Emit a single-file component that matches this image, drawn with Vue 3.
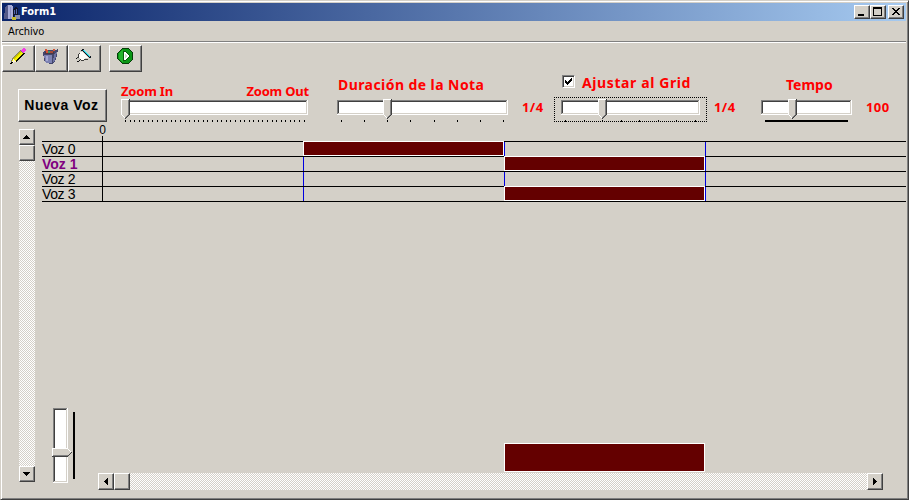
<script setup>
const range = (n, start, step) => Array.from({ length: n }, (_, i) => Math.round(start + i * step))

// Horizontal trackbars: coordinates are relative to the left edge of each bar
const bars = {
  zoom: { width: 187, track: [1, 186], thumb: 0, ticks: range(40, 4, 4.58) },
  duration: { width: 172, track: [0, 171], thumb: 46, ticks: [4, 27, 50, 73, 97, 120, 143, 166] },
  grid: { width: 140, track: [0, 139], thumb: 37, ticks: [4, 23, 41, 60, 78, 97, 115, 134] },
  tempo: { width: 91, track: [0, 91], thumb: 27, ticks: [], line: [4, 83] },
}

const voices = [
  { name: 'Voz 0', cells: [0, 1, 0, 0] },
  { name: 'Voz 1', cells: [0, 0, 1, 0], active: true },
  { name: 'Voz 2', cells: [0, 0, 0, 0] },
  { name: 'Voz 3', cells: [0, 0, 1, 0] },
]

const controls = [
  { id: 'zoom' },
  { id: 'duration', title: 'Duración de la Nota', value: '1/4' },
  { id: 'grid', title: 'Ajustar al Grid', value: '1/4', check: true },
  { id: 'tempo', title: 'Tempo', value: '100' },
]
</script>

<template>
  <div class="window">
    <header class="titlebar">
      <svg class="app-icon" width="16" height="16" viewBox="0 0 16 16" shape-rendering="crispEdges">
        <path d="M1 3 4 1V15H0Z" fill="#555a88" />
        <path d="M4 1H7L9 3V15H4Z" fill="#a8acd8" />
        <path d="M6 3H7V15H6Z" fill="#8b90c2" />
        <path d="M9 5 12 3 14 5V11H10V15H9Z" fill="#10152c" />
        <path d="M10 6H11V10H10ZM12 5H13V10H12Z" fill="#5264ac" />
        <path d="M11 11H16V15H11Z" fill="#858cac" />
        <path d="M8 13H12V16H8Z" fill="#c4b82f" />
      </svg>
      <h1>Form1</h1>
      <div class="window-buttons">
        <button class="raised">
          <svg width="12" height="10" shape-rendering="crispEdges"><path d="M2 7h6v2H2z" /></svg>
        </button>
        <button class="raised">
          <svg width="12" height="10" shape-rendering="crispEdges"><path fill-rule="evenodd" d="M1 0h9v9H1zM2 2v6h7V2z" /></svg>
        </button>
        <button class="raised close">
          <svg width="12" height="10" shape-rendering="crispEdges">
            <path d="M2 1h2v1h1v1h2V2h1V1h2v1H9v1H8v1H7v1h1v1h1v1h1v1H8V7H7V6H5v1H4v1H2V7h1V6h1V5h1V4H4V3H3V2H2z" />
          </svg>
        </button>
      </div>
    </header>

    <nav class="menu"><span>Archivo</span></nav>

    <div class="toolbar">
      <button class="raised tool">
        <svg width="16" height="17" shape-rendering="crispEdges">
          <path d="M1 15 3 10 11 2 14 5 6 13Z" fill="#f4f000" />
          <path d="M3.5 11 11 3.5" stroke="#c8c200" />
          <path d="M1 15.5 2.5 10.5 11 2" stroke="#808068" fill="none" />
          <path d="M6 13.5 14.5 5" stroke="#101000" stroke-width="1.3" />
          <path d="M3 11h1v1h1v1h1v1H4v1H2v-2h1z" fill="#fff3d0" />
          <path d="M1 14h2v1H1zM0 15h2v1H0z" />
          <path d="M11 2h1V1h1V0h2v1h1v2h-1v1h-1v1h-1V4h-1V3h-1z" fill="#f53ce4" />
          <path d="M10 2h1v1h1v1h1v1h-1V4h-1V3h-1z" fill="#777" />
        </svg>
      </button>
      <button class="raised tool">
        <svg width="18" height="17" shape-rendering="crispEdges">
          <path d="M1 4 5 2 13 2 16 1 15 8 13 14 10 16 4 15 2 12Z" fill="#44476c" />
          <path d="M2 7H10V15H4L3 12Z" fill="#7d82b2" />
          <path d="M4 8H6V13H4Z" fill="#a3a8d4" />
          <path d="M12 6 15 3 14 9 12 14H11Z" fill="#6c71a2" />
          <path d="M3 4H12V6H3Z" fill="#493746" />
          <path d="M3 1H5V2H6V5H4V3H3ZM11 1H13V3H11Z" fill="#d45435" />
          <path d="M6 3H8V5H6Z" fill="#3f9268" />
          <path d="M8 3H11V5H8Z" fill="#a44937" />
        </svg>
      </button>
      <button class="raised tool">
        <svg width="16" height="17" shape-rendering="crispEdges">
          <path d="M5 2H6V1H8V2H9V3H10V4H11V5H12V6H13V7H14V8H15V10H13V9H12V8H11V7H10V6H9V5H8V4H7V3H5Z" fill="#101820" />
          <path d="M7 2H8V3H9V4H10V5H11V6H12V7H13V8H14V9H13V8H12V7H11V6H10V5H9V4H8V3H7Z" fill="#24c9d5" />
          <path d="M8 2H9V3H10V4H11V5H12V6H13V7H14V8H13V7H12V6H11V5H10V4H9V3H8Z" fill="#74e8ee" />
          <path d="M4 4H7V5H8V6H9V7H10V8H11V9H12V10H9V11H8V12H5V11H4V10H3V9H2V7H3V5H4Z" fill="#fffdf8" />
          <path d="M2 6H3V5H4V6H3V9H2ZM8 11H12V12H8ZM5 12H8V13H5ZM1 9H3V10H1ZM4 11H5V12H4Z" fill="#3d3d3a" />
          <path d="M1 10H4V12H2V11H1Z" fill="#c0c0b8" />
          <path d="M0 10H1V11H0ZM1 13H3V12H4V13H3V14H1Z" fill="#111" />
        </svg>
      </button>
      <button class="raised tool play">
        <svg width="17" height="17" shape-rendering="crispEdges">
          <path d="M5 0H11L16 5V11L11 16H5L0 11V5Z" fill="#063d08" />
          <path d="M5 1H11L15 5V11L11 15H5L1 11V5Z" fill="#0b9716" />
          <path d="M5 2H6V14H5L2 11V5Z" fill="#23b52b" />
          <path d="M6 3H8L13 7V9L8 13H6Z" fill="#075c0b" />
          <path d="M7 4H8L12 7V9L8 12H7Z" fill="#fff" />
          <path d="M8 6H9V7H10V9H9V10H8Z" fill="#c5e6c5" />
        </svg>
      </button>
    </div>

    <section class="controls">
      <button class="raised new-voice">Nueva Voz</button>

      <div v-for="c in controls" :key="c.id" class="control" :class="c.id">
        <div class="caption">
          <template v-if="c.id === 'zoom'"><span>Zoom In</span><span>Zoom Out</span></template>
          <template v-else>
            <span v-if="c.check" class="checkbox">
              <svg width="9" height="9" shape-rendering="crispEdges">
                <path d="M1 3h1v1h1v1h1V4h1V3h1V2h1V1h1v3H7v1H6v1H5v1H4v1H3V7H2V6H1z" />
              </svg>
            </span>
            <span>{{ c.title }}</span>
          </template>
        </div>
        <div class="slider">
          <svg :width="bars[c.id].width" height="24" shape-rendering="crispEdges">
            <g :transform="`translate(${bars[c.id].track[0]} 1)`">
              <rect :width="bars[c.id].track[1]" height="15" fill="#fff" />
              <rect :width="bars[c.id].track[1] - 1" height="14" fill="#808080" />
              <rect x="1" y="1" :width="bars[c.id].track[1] - 2" height="13" fill="#d4d0c8" />
              <rect x="1" y="1" :width="bars[c.id].track[1] - 3" height="12" fill="#404040" />
              <rect x="2" y="2" :width="bars[c.id].track[1] - 4" height="11" fill="#fff" />
            </g>
            <g :transform="`translate(${bars[c.id].thumb} 0)`">
              <path d="M0 0h9v16h-1v1h-1v1h-1v1h-1v1h-1v-1h-1v-1h-1v-1h-1v-1h-1z" fill="#404040" />
              <path d="M0 0h8v16h-1v1h-1v1h-1v1h-2v-1h-1v-1h-1v-1h-1z" fill="#808080" />
              <path d="M0 0h8v1h-7v15h1v1h1v1h1v1h-1v-1h-1v-1h-1v-1h-1z" fill="#fff" />
              <path d="M1 1h6v15h-1v1h-1v1h-2v-1h-1v-1h-1z" fill="#d4d0c8" />
            </g>
            <rect v-for="t in bars[c.id].ticks" :key="t" :x="t" y="21" width="1" height="2" />
            <rect v-if="bars[c.id].line" :x="bars[c.id].line[0]" y="21" :width="bars[c.id].line[1]" height="2" />
          </svg>
        </div>
        <span v-if="c.value" class="value">{{ c.value }}</span>
      </div>
    </section>

    <main class="workspace">
      <div class="scrollbar vertical">
        <button class="raised"><svg width="7" height="4" shape-rendering="crispEdges"><path d="M3 0h1v1h1v1h1v1h1v1H0V3h1V2h1V1h1z" /></svg></button>
        <div class="raised thumb"></div>
        <div class="groove"></div>
        <button class="raised"><svg width="7" height="4" shape-rendering="crispEdges"><path d="M0 0h7v1H6v1H5v1H4v1H3V3H2V2H1V1H0z" /></svg></button>
      </div>

      <div class="score">
        <div class="ruler"><span>0</span><i></i></div>
        <div class="voices">
          <div v-for="v in voices" :key="v.name" class="voice" :class="{ active: v.active }">
            <span class="name">{{ v.name }}</span>
            <div v-for="(filled, i) in v.cells" :key="i" class="cell" :class="{ note: filled }"></div>
          </div>
        </div>

        <div class="lower">
          <svg class="volume" width="24" height="75" shape-rendering="crispEdges">
            <path d="M1 0h15v75H1z" fill="#fff" />
            <path d="M1 0h14v74H1z" fill="#808080" />
            <path d="M2 1h13v73H2z" fill="#d4d0c8" />
            <path d="M2 1h12v72H2z" fill="#404040" />
            <path d="M3 2h11v71H3z" fill="#fff" />
            <path d="M0 40h16v1h1v1h1v1h1v1h1v1h-1v1h-1v1h-1v1h-1v1H0z" fill="#404040" />
            <path d="M0 40h16v1h1v1h1v1h1v1h-1v1h-1v1h-1v1h-1v1H0z" fill="#fff" />
            <path d="M1 41h15v1h1v1h1v1h1v1h-1v1h-1v1h-1v1H1z" fill="#d4d0c8" />
            <path d="M1 47h15v1H1z" fill="#808080" />
            <path d="M0 48h16v1H0z" fill="#404040" />
            <path d="M21 4h2v67h-2z" />
          </svg>
          <div class="preview"></div>
        </div>

        <div class="scrollbar horizontal">
          <button class="raised"><svg width="4" height="7" shape-rendering="crispEdges"><path d="M3 0h1v7H3V6H2V5H1V4H0V3h1V2h1V1h1z" /></svg></button>
          <div class="raised thumb"></div>
          <div class="groove"></div>
          <button class="raised"><svg width="4" height="7" shape-rendering="crispEdges"><path d="M0 0h1v1h1v1h1v1h1v1H3v1H2v1H1v1H0z" /></svg></button>
        </div>
      </div>
    </main>
  </div>
</template>

<style>
body {
  background: #fff;
}
</style>

<style scoped>
.window,
.window * {
  box-sizing: border-box;
}

.window {
  display: flex;
  flex-direction: column;
  width: 909px;
  height: 500px;
  padding: 1px 0 0 1px;
  border: 1px solid #404040;
  border-top-color: #d4d0c8;
  border-left-color: #d4d0c8;
  background: #d4d0c8;
  box-shadow: inset 1px 1px #fff, inset -1px -1px #808080;
  color: #000;
  font-family: "Liberation Sans", sans-serif;
}

svg {
  display: block;
  flex: none;
  overflow: visible;
}

button {
  display: flex;
  align-items: center;
  justify-content: center;
  padding: 0;
  background: #d4d0c8;
  color: #000;
}

.raised {
  border: 1px solid #404040;
  border-top-color: #fff;
  border-left-color: #fff;
  background: #d4d0c8;
  box-shadow: inset -1px -1px #808080;
}

.titlebar {
  display: flex;
  align-items: center;
  height: 18px;
  margin: 1px 2px 0 0;
  padding: 0 2px;
  background: linear-gradient(90deg, #0a246a, #a6caf0);
}

h1 {
  margin: 0 0 0 1px;
  color: #fff;
  font: bold 11px/18px "DejaVu Sans Condensed", "DejaVu Sans", sans-serif;
}

.window-buttons {
  display: flex;
  margin-left: auto;
}

.window-buttons button {
  width: 16px;
  height: 14px;
}

.window-buttons .close {
  margin-left: 2px;
}

.menu {
  height: 22px;
  margin-right: 2px;
  padding-left: 6px;
  border-bottom: 1px solid #fff;
  box-shadow: inset 0 -1px #808080;
  font: 11px/21px "DejaVu Sans Condensed", "DejaVu Sans", sans-serif;
  letter-spacing: -0.1px;
}

.toolbar {
  display: flex;
  height: 29px;
  padding-top: 2px;
}

.tool {
  width: 33px;
  height: 27px;
  align-items: flex-start;
  padding: 2px 1px 0 0;
}

.play {
  margin-left: 8px;
}

.controls {
  display: flex;
  height: 57px;
  padding-left: 16px;
}

.new-voice {
  width: 89px;
  height: 33px;
  margin-top: 17px;
  padding: 0 2px 2px 0;
  font: bold 14px "Liberation Sans", sans-serif;
  letter-spacing: 0.5px;
}

.control {
  display: grid;
  grid-template-columns: auto 1fr;
  grid-template-rows: 25px 25px;
  align-content: start;
  color: #f00;
  font: bold 14px "Comic Sans MS", "Noto Sans", sans-serif;
  white-space: nowrap;
}

.caption {
  display: flex;
  grid-column: 1 / -1;
  height: 25px;
  line-height: 25px;
}

.slider {
  padding-top: 2px;
}

.value {
  font-size: 13px;
  line-height: 20px;
  letter-spacing: 0.4px;
}

.zoom {
  width: 216px;
  margin-left: 14px;
}

.zoom .caption {
  justify-content: space-between;
  width: 188px;
  padding-top: 7px;
  font-size: 13px;
  letter-spacing: -0.2px;
}

.duration .caption {
  padding-left: 1px;
  letter-spacing: 0.43px;
}

.duration {
  width: 217px;
}

.duration .value {
  padding-left: 13px;
}

.grid {
  width: 207px;
}

.grid .caption {
  padding-left: 8px;
  line-height: 21px;
  letter-spacing: 0.6px;
}

.grid .slider {
  width: 153px;
  height: 25px;
  padding: 1px 0 0 6px;
  border: 1px dotted #000;
}

.grid .value {
  padding-left: 7px;
}

.checkbox {
  width: 13px;
  height: 13px;
  margin: 3px 7px 0 0;
  padding: 1px;
  border: 1px solid #fff;
  border-top-color: #808080;
  border-left-color: #808080;
  background: #fff;
  box-shadow: inset 1px 1px #404040, inset -1px -1px #d4d0c8;
}

.tempo .caption {
  padding-left: 25px;
}

.tempo .value {
  padding-left: 14px;
}

.workspace {
  display: flex;
  flex: 1;
  padding-left: 17px;
}

.scrollbar {
  display: flex;
}

.scrollbar .groove {
  flex: 1;
  background: repeating-conic-gradient(#fff 0 25%, #d4d0c8 0 50%) 0 0 / 2px 2px;
}

.scrollbar button {
  padding: 0 1px 1px 0;
}

.vertical {
  flex-direction: column;
  width: 16px;
  height: 353px;
}

.vertical button,
.vertical .thumb {
  height: 16px;
}

.horizontal {
  width: 785px;
  height: 17px;
  margin-left: 56px;
}

.horizontal button,
.horizontal .thumb {
  width: 16px;
}

.score {
  display: flex;
  flex-direction: column;
  width: 864px;
  margin-left: 7px;
}

.ruler {
  display: flex;
  flex-direction: column;
  justify-content: flex-end;
  align-items: center;
  width: 9px;
  height: 12px;
  margin-left: 56px;
  font-size: 12px;
}

.ruler span {
  line-height: 12px;
}

.ruler i {
  width: 1px;
  height: 5px;
  background: #000;
  flex: none;
}

.voices {
  border-bottom: 1px solid #000;
}

.voice {
  display: flex;
  height: 15px;
  border-top: 1px solid #000;
}

.name {
  width: 60px;
  font-size: 14px;
  line-height: 15px;
  letter-spacing: -0.4px;
  white-space: nowrap;
}

.active .name {
  color: #800080;
  font-weight: bold;
  letter-spacing: 0;
}

.cell {
  width: 201px;
  border-left: 1px solid #0000e0;
}

.name + .cell {
  border-color: #000;
}

.cell.note {
  height: 15px;
  margin-top: -1px;
  border: 1px solid #fff;
  background: #640000;
}

.lower {
  display: flex;
  height: 271px;
  padding-left: 10px;
}

.volume {
  margin-top: 206px;
}

.preview {
  width: 201px;
  height: 29px;
  margin: 241px 0 0 428px;
  border: 1px solid #fff;
  background: #640000;
}
</style>
